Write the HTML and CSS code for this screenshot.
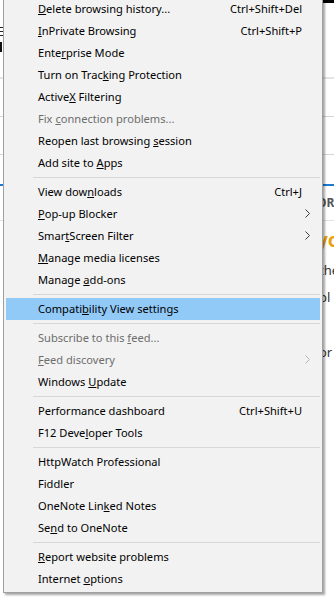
FILE: index.html
```html
<!DOCTYPE html>
<html lang="en">
<head>
  <meta charset="UTF-8">
  <meta name="viewport" content="width=device-width, initial-scale=1">
  <title>Tools</title>
  <link rel="stylesheet" href="styles.css">
</head>
<body>

<div class="page">
  <div class="topbar"></div>
  <div class="burger"><span></span><span></span><span></span></div>
  <div class="burger-bar"></div>
  <div class="rule rule-wide"></div>
  <div class="rule rule-116"></div>
  <div class="rule rule-154"></div>
  <div class="rule-blue"></div>
  <div class="row row-more"><span class="right more">ORE</span></div>
  <div class="rule rule-220"></div>
  <div class="row row-title">
    <div class="left-col"><span>r</span><span>t</span></div>
    <span class="right title">you</span>
  </div>
  <div class="row row-text"><span class="right">the</span></div>
  <div class="row row-text2"><span class="right">pl</span></div>
  <div class="row row-last"><span class="right">or</span></div>
</div>

<!-- menu Herramientas -->
<div class="menu">
  <div class="item"><span class="label"><u>D</u>elete browsing history...</span><span class="key">Ctrl+Shift+Del</span></div>
  <div class="item"><span class="label"><u>I</u>nPrivate Browsing</span><span class="key">Ctrl+Shift+P</span></div>
  <div class="item"><span class="label">Ente<u>r</u>prise Mode</span></div>
  <div class="item"><span class="label">Turn on Trac<u>k</u>ing Protection</span></div>
  <div class="item"><span class="label">Active<u>X</u> Filtering</span></div>
  <div class="item disabled"><span class="label">Fix <u>c</u>onnection problems...</span></div>
  <div class="item"><span class="label">Reopen last browsing <u>s</u>ession</span></div>
  <div class="item"><span class="label">Add site to <u>A</u>pps</span></div>
  <div class="sep"></div>
  <div class="item"><span class="label">View dow<u>n</u>loads</span><span class="key">Ctrl+J</span></div>
  <div class="item"><span class="label"><u>P</u>op-up Blocker</span><span class="arrow"><svg width="5" height="9" viewBox="0 0 5 9"><path d="M0.5 0.5 L4.5 4.5 L0.5 8.5" fill="none" stroke="#3c3c3c" stroke-width="1"/></svg></span></div>
  <div class="item"><span class="label">Smar<u>t</u>Screen Filter</span><span class="arrow"><svg width="5" height="9" viewBox="0 0 5 9"><path d="M0.5 0.5 L4.5 4.5 L0.5 8.5" fill="none" stroke="#3c3c3c" stroke-width="1"/></svg></span></div>
  <div class="item"><span class="label"><u>M</u>anage media licenses</span></div>
  <div class="item"><span class="label">Manage <u>a</u>dd-ons</span></div>
  <div class="sep"></div>
  <div class="item active"><span class="label">Compati<u>b</u>ility View settings</span></div>
  <div class="sep"></div>
  <div class="item disabled"><span class="label">Subscribe to this <u>f</u>eed...</span></div>
  <div class="item disabled"><span class="label"><u>F</u>eed discovery</span><span class="arrow"><svg width="5" height="9" viewBox="0 0 5 9"><path d="M0.5 0.5 L4.5 4.5 L0.5 8.5" fill="none" stroke="#b4b4b4" stroke-width="1"/></svg></span></div>
  <div class="item"><span class="label">Windows <u>U</u>pdate</span></div>
  <div class="sep"></div>
  <div class="item"><span class="label">Performance dashboard</span><span class="key">Ctrl+Shift+U</span></div>
  <div class="item"><span class="label">F12 Deve<u>l</u>oper Tools</span></div>
  <div class="sep"></div>
  <div class="item"><span class="label">HttpWatch Professional</span></div>
  <div class="item"><span class="label">Fiddler</span></div>
  <div class="item"><span class="label">OneNote Lin<u>k</u>ed Notes</span></div>
  <div class="item"><span class="label">Se<u>n</u>d to OneNote</span></div>
  <div class="sep"></div>
  <div class="item"><span class="label"><u>R</u>eport website problems</span></div>
  <div class="item"><span class="label">Internet <u>o</u>ptions</span></div>
</div>

</body>
</html>
```

FILE: styles.css
```css
/* pagina de fondo */
body {
  margin: 0;
  background: #fff;
  overflow: hidden;
  font-family: "Noto Sans", sans-serif;
}
.page {
  height: 613px;
  overflow: hidden;
}
.topbar {
  height: 3px;
  margin-left: 323px;
  background: #000;
}
.burger {
  margin-top: 24px;
  width: 3px;
  height: 9px;
  display: flex;
  flex-direction: column;
  justify-content: space-between;
}
.burger span {
  height: 1px;
  background: #222;
}
.burger-bar {
  margin-top: 6px;
  width: 2px;
  height: 10px;
  background: #111;
}
.rule {
  height: 1px;
  background: #d6d6d6;
}
.rule-wide {
  margin-top: 25px;
  height: 2px;
  background: #e4e4e4;
}
.rule-116 {
  margin-top: 37px;
}
.rule-154 {
  margin-top: 37px;
}
.rule-blue {
  margin-top: 29px;
  height: 2px;
  background: #1a7bcf;
}
.rule-220 {
  margin-top: 0;
  background: #e2e2e2;
}
.row {
  display: flex;
  white-space: nowrap;
}
.row .right {
  margin-left: 319px;
  color: #333;
  font-size: 13px;
}
.row-more {
  margin-top: 9px;
  height: 25px;
  line-height: 16px;
}
.right.more {
  margin-left: 317px;
  color: #555;
  font-size: 12px;
  font-weight: bold;
}
.row-title {
  margin-top: 8px;
  height: 27px;
}
.left-col {
  width: 3px;
  padding-top: 5px;
  display: flex;
  flex-direction: column;
  align-items: flex-end;
  overflow: hidden;
  color: #555;
  font-size: 11px;
  line-height: 11px;
}
.row-title .right.title {
  margin-left: 317px;
  color: #eba00d;
  font-size: 19px;
  font-weight: bold;
  line-height: 22px;
  height: 22px;
}
.row-text {
  margin-top: 4px;
  height: 20px;
  line-height: 20px;
}
.row-text2 {
  margin-top: 7px;
  height: 20px;
  line-height: 20px;
}
.row-last {
  margin-top: 35px;
  height: 20px;
  line-height: 20px;
}

/* menu */
.menu {
  position: absolute;
  top: -5px;
  left: 3px;
  width: 320px;
  box-sizing: border-box;
  background: #f2f2f2;
  border: 1px solid #a0a0a0;
  padding: 2px;
  box-shadow: 2px 2px 2px rgba(0, 0, 0, 0.35);
  font-family: "Noto Sans", sans-serif;
  font-size: 11.1px;
  color: #000;
}
.item {
  display: flex;
  align-items: center;
  box-sizing: border-box;
  height: 22px;
  padding: 0 10px 2px 32px;
  white-space: nowrap;
}
.item .label {
  flex: 1;
}
.item .key {
  margin-right: 8px;
}
.item .arrow {
  display: flex;
}
.item u {
  text-underline-offset: 1px;
}
.disabled {
  color: #6d6d6d;
}
.active {
  background: #91c9f7;
}
.sep {
  height: 1px;
  margin: 3px 0 3px 27px;
  background: #d7d7d7;
}
```
